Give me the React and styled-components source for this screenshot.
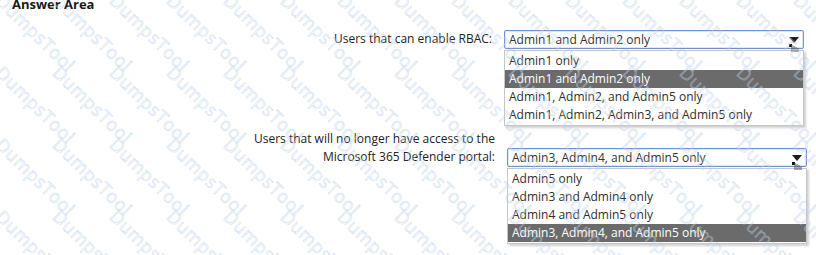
import React from "react";
import styled, { createGlobalStyle } from "styled-components";

const Global = createGlobalStyle`
  html, body { margin: 0; padding: 0; background: #ffffff; }
  body { font-family: "Open Sans", "Noto Sans", sans-serif; color: #2b2b2b; }
`;

const Page = styled.div`
  position: relative;
  width: 816px;
  height: 255px;
  overflow: hidden;
  background: #fff;
`;

const Title = styled.h1`
  margin: 0;
  padding: 0 0 0 12px;
  font-size: 13px;
  font-weight: 700;
  line-height: 14px;
  margin-top: -3px;
  color: #1a1a1a;
`;

const Form = styled.div`
  display: flex;
  flex-direction: column;
  gap: 4px;
  margin-top: 19px;
`;

const Field = styled.div`
  display: flex;
  align-items: flex-start;
  gap: 12px;
  padding-left: ${(p) => p.$shift}px;
`;

const Label = styled.div`
  width: 492px;
  text-align: right;
  font-size: 12px;
  line-height: 18px;
  color: #222;
`;

const DropCol = styled.div`
  display: flex;
  flex-direction: column;
  width: 300px;
  margin-top: ${(p) => p.$offset}px;
`;

const Select = styled.div`
  display: flex;
  align-items: center;
  height: 17px;
  border: 1px solid #6f93cf;
  border-radius: 2px;
  box-shadow: inset 0 0 0 1px #dfe8f6;
  background: #fff;
  padding-left: 4px;
  font-size: 12px;
  color: #333;
`;

const SelectText = styled.span`
  flex: 1;
  white-space: nowrap;
`;

const ArrowBtn = styled.span`
  position: relative;
  width: 18px;
  height: 17px;
  display: flex;
  align-items: center;
  justify-content: center;
`;

const List = styled.ul`
  list-style: none;
  margin: 1px 0 0;
  padding: 1px 0;
  border: 1px solid #c6c6c6;
  box-shadow: 2px 2px 2px rgba(0, 0, 0, 0.18);
  background: #fff;
`;

const Item = styled.li`
  height: 18px;
  line-height: 18px;
  padding-left: 4px;
  font-size: 12px;
  white-space: nowrap;
  color: ${(p) => (p.$active ? "#ffffff" : "#2e2e2e")};
  background: ${(p) => (p.$active ? "#6b6b6b" : "transparent")};
`;

const Watermark = styled.div`
  position: absolute;
  top: -10px;
  left: 6px;
  display: grid;
  grid-template-columns: repeat(15, 57px);
  grid-auto-rows: 72px;
  pointer-events: none;
`;

const Mark = styled.span`
  display: block;
  width: 0;
  white-space: nowrap;
  transform: rotate(44deg);
  transform-origin: 0 0;
  font-family: "Open Sans", sans-serif;
  font-size: 18px;
  line-height: 20px;
  letter-spacing: 0.6px;
  color: rgba(230, 238, 247, 0.3);
  -webkit-text-stroke: 0.5px rgba(160, 186, 218, 0.5);
`;

function Arrow() {
  return (
    <ArrowBtn>
      <svg width="18" height="22" viewBox="0 0 18 22" style={{ position: "absolute", top: 1, left: 0 }}>
        <path d="M4 5 L14 5 L9 11 Z" fill="#1c1c1c" />
        <rect x="4" y="12" width="3" height="3" fill="#111" />
        <path d="M7 13 L7 20 M9 14 L9 20 M11 15 L11 20 M13 16 L13 20" stroke="#555" strokeWidth="1" />
      </svg>
    </ArrowBtn>
  );
}

function Dropdown({ value, options, offset }) {
  return (
    <DropCol $offset={offset}>
      <Select>
        <SelectText>{value}</SelectText>
        <Arrow />
      </Select>
      <List>
        {options.map((o) => (
          <Item key={o} $active={o === value}>
            {o}
          </Item>
        ))}
      </List>
    </DropCol>
  );
}

export default function App() {
  const marks = Array.from({ length: 75 });
  return (
    <Page>
      <Global />
      <Title>Answer Area</Title>
      <Form>
        <Field $shift={0}>
          <Label>Users that can enable RBAC:</Label>
          <Dropdown
            offset={0}
            value="Admin1 and Admin2 only"
            options={[
              "Admin1 only",
              "Admin1 and Admin2 only",
              "Admin1, Admin2, and Admin5 only",
              "Admin1, Admin2, Admin3, and Admin5 only",
            ]}
          />
        </Field>
        <Field $shift={3}>
          <Label>
            Users that will no longer have access to the
            <br />
            Microsoft 365 Defender portal:
          </Label>
          <Dropdown
            offset={18}
            value="Admin3, Admin4, and Admin5 only"
            options={[
              "Admin5 only",
              "Admin3 and Admin4 only",
              "Admin4 and Admin5 only",
              "Admin3, Admin4, and Admin5 only",
            ]}
          />
        </Field>
      </Form>
      <Watermark>
        {marks.map((_, i) => (
          <div key={i}>
            <Mark>DumpsTool</Mark>
          </div>
        ))}
      </Watermark>
    </Page>
  );
}
